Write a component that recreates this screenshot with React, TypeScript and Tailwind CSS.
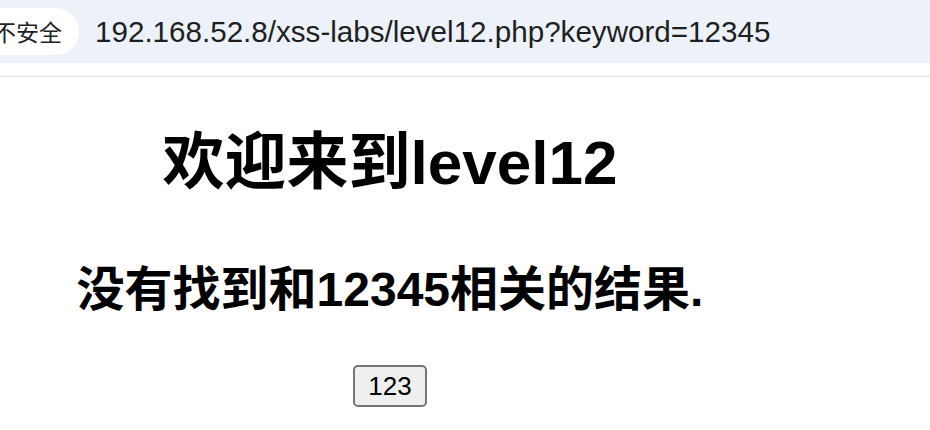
export default function App() {
  return (
    <div className="w-[930px] h-[430px] bg-white overflow-hidden" style={{ fontFamily: '"Liberation Sans", "Noto Sans CJK SC", sans-serif' }}>
      <div className="h-[63px] bg-[#edf2fa] flex items-center">
        <div className="ml-[-37px] h-[47px] pl-[30px] pr-[17px] rounded-full bg-white flex items-center text-[23px] text-[#1f1f1f]" style={{ fontFamily: '"Noto Sans CJK SC", sans-serif' }}>
          不安全
        </div>
        <div className="ml-[16px] text-[29.6px] text-[#1f1f1f] leading-none">
          192.168.52.8/xss-labs/level12.php?keyword=12345
        </div>
      </div>
      <div className="h-[13px]"></div>
      <div className="h-px bg-[#e1e1e1]"></div>
      <div className="w-[780px] text-center text-black">
        <h1 className="mt-[50px] text-[62px] leading-[72px] font-bold">欢迎来到level12</h1>
        <h2 className="mt-[63px] text-[48px] leading-[56px] font-bold">没有找到和12345相关的结果.</h2>
        <div className="mt-[47px] flex justify-center">
          <button className="w-[74px] h-[42px] bg-[#efefef] border-2 border-[#767676] rounded-[5px] text-[26px] leading-none text-black">123</button>
        </div>
      </div>
    </div>
  );
}
